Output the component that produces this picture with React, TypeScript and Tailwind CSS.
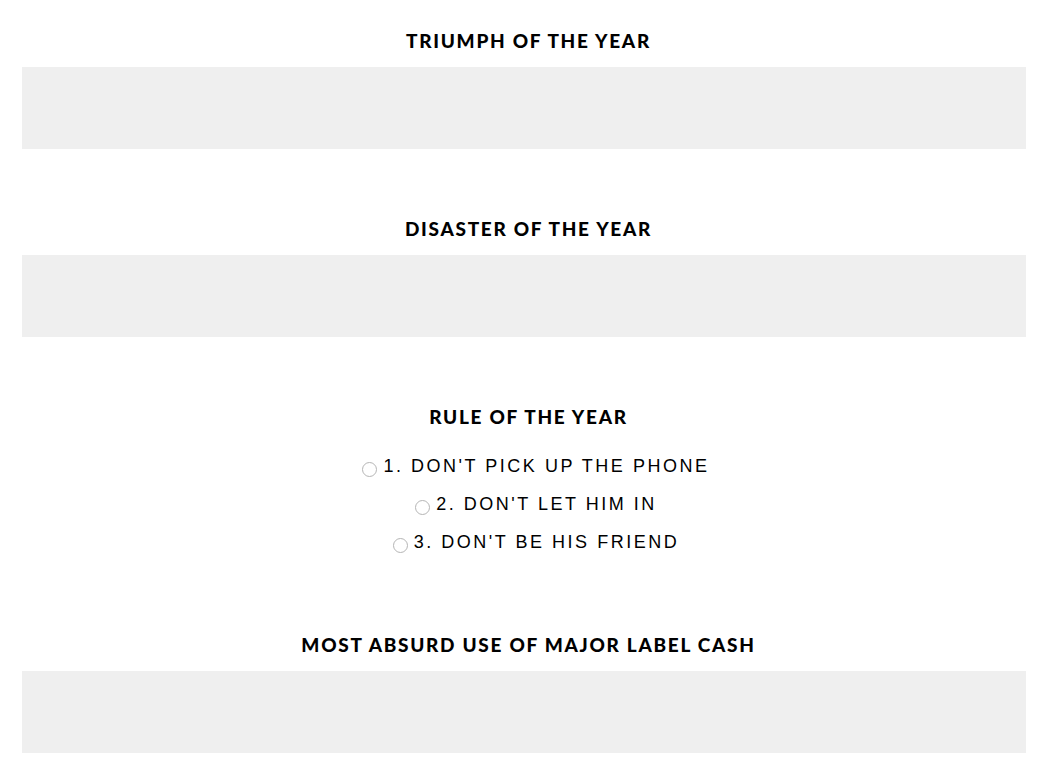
import React from 'react';

const heading = "pl-[9px] text-center text-[19px] leading-[24px] font-black tracking-[0.09em] text-black font-['Lato',sans-serif]";

function Section({ title, className }: { title: string; className?: string }) {
  return (
    <div className={className}>
      <h2 className={heading}>{title}</h2>
      <div className="mt-[14px] h-[82px] bg-[#efefef]" />
    </div>
  );
}

const rules = [
  "1. DON'T PICK UP THE PHONE",
  "2. DON'T LET HIM IN",
  "3. DON'T BE HIS FRIEND",
];

export default function App() {
  return (
    <div className="min-h-screen bg-white pl-[22px] pr-[23px] pt-[29px] pb-6 w-[1049px]">
      <Section title="TRIUMPH OF THE YEAR" />
      <Section title="DISASTER OF THE YEAR" className="mt-[68px]" />

      <div className="mt-[68px]">
        <h2 className={heading}>RULE OF THE YEAR</h2>
        <div className="mt-[18px] pl-[24px] flex flex-col items-center">
          {rules.map((r) => (
            <label key={r} className="flex items-center h-[38px] cursor-pointer">
              <input
                type="radio"
                name="rule"
                className="appearance-none w-[15px] h-[15px] rounded-full border border-[#b5b5b5] bg-white mt-[6px] mr-[6px]"
              />
              <span className="text-[18px] tracking-[0.14em] text-black font-['Liberation_Sans',Arial,sans-serif]">
                {r}
              </span>
            </label>
          ))}
        </div>
      </div>

      <Section title="MOST ABSURD USE OF MAJOR LABEL CASH" className="mt-[72px]" />
    </div>
  );
}
